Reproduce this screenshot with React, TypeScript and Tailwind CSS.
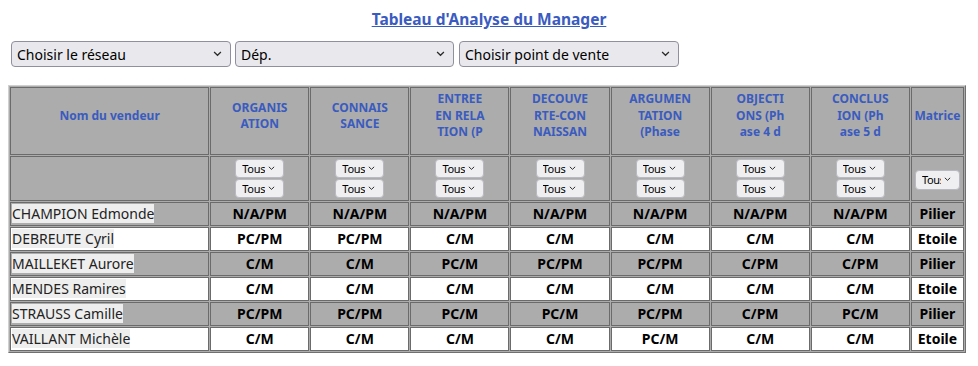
import React from 'react';

type Row = { name: string; values: string[]; matrice: string };

const columns: string[][] = [
  ['ORGANIS', 'ATION'],
  ['CONNAIS', 'SANCE'],
  ['ENTREE', 'EN RELA', 'TION (P'],
  ['DECOUVE', 'RTE-CON', 'NAISSAN'],
  ['ARGUMEN', 'TATION', '(Phase'],
  ['OBJECTI', 'ONS (Ph', 'ase 4 d'],
  ['CONCLUS', 'ION (Ph', 'ase 5 d'],
];

const rows: Row[] = [
  { name: 'CHAMPION Edmonde', values: ['N/A/PM', 'N/A/PM', 'N/A/PM', 'N/A/PM', 'N/A/PM', 'N/A/PM', 'N/A/PM'], matrice: 'Pilier' },
  { name: 'DEBREUTE Cyril', values: ['PC/PM', 'PC/PM', 'C/M', 'C/M', 'C/M', 'C/M', 'C/M'], matrice: 'Etoile' },
  { name: 'MAILLEKET Aurore', values: ['C/M', 'C/M', 'PC/M', 'PC/PM', 'PC/PM', 'C/PM', 'C/PM'], matrice: 'Pilier' },
  { name: 'MENDES Ramires', values: ['C/M', 'C/M', 'C/M', 'C/M', 'C/M', 'C/M', 'C/M'], matrice: 'Etoile' },
  { name: 'STRAUSS Camille', values: ['PC/PM', 'PC/PM', 'PC/M', 'PC/M', 'PC/PM', 'C/PM', 'PC/M'], matrice: 'Pilier' },
  { name: 'VAILLANT Michèle', values: ['C/M', 'C/M', 'C/M', 'C/M', 'PC/M', 'C/M', 'C/M'], matrice: 'Etoile' },
];

const cell = 'border border-[#6b6b6b]';
const headText = 'text-[12px] leading-[16.5px] font-bold text-[#3a5bbf] pb-[10px]';

const Chevron = ({ right, size }: { right: number; size: number }) => (
  <svg
    className="absolute top-0 bottom-0 my-auto pointer-events-none"
    style={{ right }}
    width={size}
    height={size * 0.6}
    viewBox="0 0 10 6"
    fill="none"
  >
    <path d="M1.2 1.2 5 4.8 8.8 1.2" stroke="#2a2a2a" strokeWidth="1.4" />
  </svg>
);

function Select({
  label,
  className,
  textClass,
  chevronRight,
  chevronSize,
}: {
  label: string;
  className: string;
  textClass: string;
  chevronRight: number;
  chevronSize: number;
}) {
  return (
    <div className={`relative shrink-0 ${className}`}>
      <select
        className={`block appearance-none w-full h-full bg-[#e9e9ed] border rounded-[4px] text-black font-normal ${textClass}`}
        defaultValue={label}
      >
        <option>{label}</option>
      </select>
      <Chevron right={chevronRight} size={chevronSize} />
    </div>
  );
}

function TinySelect({ narrow }: { narrow?: boolean }) {
  return (
    <Select
      label="Tous"
      className={narrow ? 'w-[45px] h-[20px]' : 'w-[49px] h-[19px]'}
      textClass="text-[11px] tracking-[-0.3px] leading-none pl-[6px] pr-[18px] border-[#b9b9c0] bg-[#efeff2]"
      chevronRight={9}
      chevronSize={7}
    />
  );
}

export default function App() {
  return (
    <div className="p-2 bg-white text-black" style={{ fontFamily: '"Noto Sans", "Open Sans", sans-serif' }}>
      <h1 className="text-center text-[15.5px] leading-[22px] font-bold text-[#3a5bbf] underline">
        Tableau d'Analyse du Manager
      </h1>

      {/* Filtres */}
      <div className="flex items-center mt-[11px] ml-[3px]">
        <Select label="Choisir le réseau" className="w-[220px] h-[26px]" textClass="text-[14px] pl-[5px] border-[#8f8f9d]" chevronRight={9} chevronSize={9} />
        <Select label="Dép." className="w-[219px] h-[26px] ml-[4px]" textClass="text-[14px] pl-[5px] border-[#8f8f9d]" chevronRight={9} chevronSize={9} />
        <Select label="Choisir point de vente" className="w-[220px] h-[26px] ml-[5px]" textClass="text-[14px] pl-[5px] border-[#8f8f9d]" chevronRight={9} chevronSize={9} />
      </div>

      {/* Tableau */}
      <table className="mt-[18px] w-[958px] table-fixed border-separate border-spacing-[1px] bg-[#acacac] border border-t-[#d0d0d0] border-l-[#d0d0d0] border-r-[#707070] border-b-[#707070]">
        <colgroup>
          <col className="w-[199px]" />
          {columns.map((_, i) => (
            <col key={i} className="w-[99px]" />
          ))}
          <col className="w-[53px]" />
        </colgroup>
        <thead>
          <tr className="h-[68px]">
            <th className={`${cell} ${headText}`}>Nom du vendeur</th>
            {columns.map((lines, i) => (
              <th key={i} className={`${cell} ${headText}`}>
                {lines.map((l, j) => (
                  <div key={j}>{l}</div>
                ))}
              </th>
            ))}
            <th className={`${cell} ${headText}`}>Matrice</th>
          </tr>
          <tr className="h-[45px]">
            <th className={`${cell} p-0`} />
            {columns.map((_, i) => (
              <th key={i} className={`${cell} p-0`}>
                <div className="flex flex-col items-center gap-[1px]">
                  <TinySelect />
                  <TinySelect />
                </div>
              </th>
            ))}
            <th className={`${cell} p-0`}>
              <div className="flex justify-center pt-[2px]">
                <TinySelect narrow />
              </div>
            </th>
          </tr>
        </thead>
        <tbody>
          {rows.map((r, i) => (
            <tr key={r.name} className={`h-[24px] ${i % 2 === 1 ? 'bg-white' : ''}`}>
              <td className={`${cell} text-[14px] leading-[20px] p-0 pl-[1px]`}>
                <span className="bg-[#eeeeee] text-[#222]">{r.name}</span>
              </td>
              {r.values.map((v, j) => (
                <td key={j} className={`${cell} text-center text-[14px] leading-[20px] font-bold`}>
                  {v}
                </td>
              ))}
              <td className={`${cell} text-center text-[14px] leading-[20px] font-bold`}>{r.matrice}</td>
            </tr>
          ))}
        </tbody>
      </table>
    </div>
  );
}
